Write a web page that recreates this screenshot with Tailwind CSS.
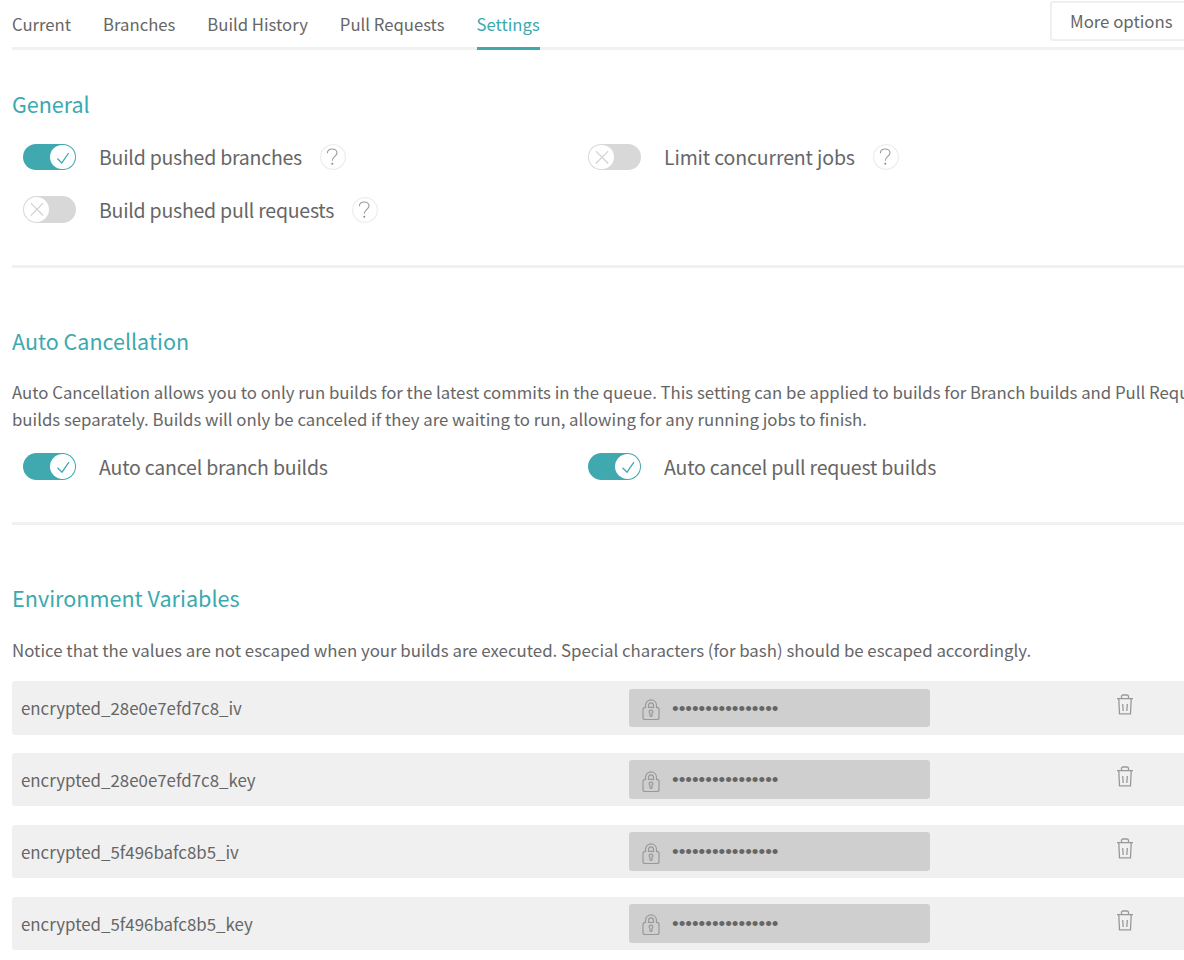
<!DOCTYPE html>
<html lang="en">
<head>
<meta charset="utf-8">
<title>Settings</title>
<script src="https://cdn.jsdelivr.net/npm/@tailwindcss/browser@4"></script>
</head>
<body class="bg-white overflow-hidden h-[960px] font-['Noto_Sans_CJK_SC',sans-serif] text-[#666] text-[16.8px]">
<svg class="hidden">
  <symbol id="check" viewBox="0 0 24 24"><path d="M7.200 13.200L11.500 17.500L18.200 7.800" fill="none" stroke="currentColor" stroke-width="1.200"/></symbol>
  <symbol id="cross" viewBox="0 0 24 24"><path d="M6.700 6L18.700 18M18.700 6L6.700 18" fill="none" stroke="currentColor" stroke-width="1.200"/></symbol>
  <symbol id="help" viewBox="0 0 26 26"><circle cx="13" cy="13" r="12.400" fill="none" stroke="#ededed" stroke-width="1.200"/><path d="M7.400 9.200C7.400 3.600 17 3.700 17 8.800C17 12.600 12.300 12.200 12.300 16.800" fill="none" stroke="#999" stroke-width="1.100"/><circle cx="12.300" cy="19.800" r="1" fill="#888"/></symbol>
  <symbol id="lock" viewBox="0 0 18 22"><g fill="none" stroke="#999" stroke-width="1.200"><path d="M3.500 8.300V6.500C3.500 -.9 14.500 -.9 14.500 6.500V8.300C16 8.300 17 9 17 10.500V18.500C17 20 16.200 20.500 15 20.500H3C1.800 20.500 1 20 1 18.500V10.500C1 9 2 8.300 3.500 8.300Z"/><path d="M6.500 8.300V6.500C6.500 3 11.500 3 11.500 6.500V8.300Z"/><path d="M8 14.200C6.300 13 7.200 11.200 9 11.200S11.700 13 10 14.200V16.500C10 17.700 8 17.700 8 16.500Z"/></g></symbol>
  <symbol id="trash" viewBox="0 0 16 21"><g fill="none" stroke="#999" stroke-width="1.300"><path d="M0 4.600H16M4.500 4.500V2.500Q4.500 1 6 1H10Q11.500 1 11.500 2.500V4.500M1.800 4.600L2.500 19.800H13.500L14.200 4.600M5.700 10L6.200 17M10.300 10L9.800 17"/></g></symbol>
</svg>
<main class="w-[1220px] pl-3">
  <nav class="flex h-[50px] border-b-3 border-[#f1f1f1] text-[16.7px] leading-[26px]">
    <div class="flex gap-8 pt-[11px]">
      <a>Current</a><a>Branches</a><a>Build History</a><a>Pull Requests</a>
      <a class="h-[39px] text-[#3ba9b0] border-b-3 border-[#3fa9af]">Settings</a>
    </div>
    <button class="ml-auto mr-[10px] mt-px h-[40px] w-[160px] shrink-0 rounded-[3px] border-2 border-[#efefef] pl-[18px] text-left text-[16.8px]">More options</button>
  </nav>

  <section class="h-[218px] border-b-3 border-[#f1f1f1] pt-[38px]">
    <h2 class="text-[21.5px] leading-8 text-[#3ba9b0]">General</h2>
    <div class="mt-[10.5px] grid grid-cols-[565px_565px] pl-[11px] text-[19.5px] leading-[52px]">
      <div class="flex h-[52.6px] items-center"><span class="flex h-[26.6px] w-[53px] justify-end rounded-full bg-[#3fa9af] p-px"><svg class="size-[24.6px] rounded-full bg-white text-[#3fa9af]"><use href="#check"/></svg></span><span class="ml-[23px] tracking-[-0.23px]">Build pushed branches</span><svg class="ml-[18px] size-[26px]"><use href="#help"/></svg></div>
      <div class="flex h-[52.6px] items-center"><span class="flex h-[26.6px] w-[53px] rounded-full bg-[#d8d8d8] p-px"><svg class="size-[24.6px] rounded-full bg-white text-[#d2d2d2]"><use href="#cross"/></svg></span><span class="ml-[23px] tracking-[-0.14px]">Limit concurrent jobs</span><svg class="ml-[18px] size-[26px]"><use href="#help"/></svg></div>
      <div class="flex h-[52.6px] items-center"><span class="flex h-[26.6px] w-[53px] rounded-full bg-[#d8d8d8] p-px"><svg class="size-[24.6px] rounded-full bg-white text-[#d2d2d2]"><use href="#cross"/></svg></span><span class="ml-[23px] pt-[1.5px] tracking-[-0.24px]">Build pushed pull requests</span><svg class="ml-[18px] mt-px size-[26px]"><use href="#help"/></svg></div>
    </div>
  </section>

  <section class="h-[257px] border-b-3 border-[#f1f1f1] pt-[57px]">
    <h2 class="text-[21.5px] leading-8 text-[#3ba9b0]">Auto Cancellation</h2>
    <p class="mt-[22px] whitespace-nowrap text-[16.77px] leading-[27px]">Auto Cancellation allows you to only run builds for the latest commits in the queue. This setting can be applied to builds for Branch builds and Pull Request<br>builds separately. Builds will only be canceled if they are waiting to run, allowing for any running jobs to finish.</p>
    <div class="mt-[7px] grid grid-cols-[565px_565px] pl-[11px] text-[19.5px] tracking-[-0.2px]">
      <div class="flex h-[53px] items-center"><span class="flex h-[27px] w-[53px] justify-end rounded-full bg-[#3fa9af] p-px"><svg class="size-[25px] rounded-full bg-white text-[#3fa9af]"><use href="#check"/></svg></span><span class="ml-[23px]">Auto cancel branch builds</span></div>
      <div class="flex h-[53px] items-center"><span class="flex h-[27px] w-[53px] justify-end rounded-full bg-[#3fa9af] p-px"><svg class="size-[25px] rounded-full bg-white text-[#3fa9af]"><use href="#check"/></svg></span><span class="ml-[23px]">Auto cancel pull request builds</span></div>
    </div>
  </section>

  <section class="pt-[57px]">
    <h2 class="text-[21.6px] leading-8 text-[#3ba9b0]">Environment Variables</h2>
    <p class="mt-[22px] text-[16.83px] leading-[27px]">Notice that the values are not escaped when your builds are executed. Special characters (for bash) should be escaped accordingly.</p>
    <ul class="mt-[18px] flex flex-col gap-[18.4px] text-[16.87px]">
      <li class="flex h-[53.5px] items-center rounded-[3px] bg-[#f0f0f0] pl-[9px]"><span class="w-[608px]">encrypted_28e0e7efd7c8_iv</span><span class="flex h-[38.5px] w-[301px] items-center rounded-[3px] bg-[#cfcfcf] pl-[13px]"><svg class="mt-1 h-[22px] w-[18px] shrink-0"><use href="#lock"/></svg><span class="ml-3 pt-0.5 font-['Liberation_Sans'] text-[19px]">••••••••••••••••</span></span><svg class="mb-1.5 ml-[187px] h-[21px] w-4"><use href="#trash"/></svg></li>
      <li class="flex h-[53.5px] items-center rounded-[3px] bg-[#f0f0f0] pl-[9px]"><span class="w-[608px]">encrypted_28e0e7efd7c8_key</span><span class="flex h-[38.5px] w-[301px] items-center rounded-[3px] bg-[#cfcfcf] pl-[13px]"><svg class="mt-1 h-[22px] w-[18px] shrink-0"><use href="#lock"/></svg><span class="ml-3 pt-0.5 font-['Liberation_Sans'] text-[19px]">••••••••••••••••</span></span><svg class="mb-1.5 ml-[187px] h-[21px] w-4"><use href="#trash"/></svg></li>
      <li class="flex h-[53.5px] items-center rounded-[3px] bg-[#f0f0f0] pl-[9px]"><span class="w-[608px]">encrypted_5f496bafc8b5_iv</span><span class="flex h-[38.5px] w-[301px] items-center rounded-[3px] bg-[#cfcfcf] pl-[13px]"><svg class="mt-1 h-[22px] w-[18px] shrink-0"><use href="#lock"/></svg><span class="ml-3 pt-0.5 font-['Liberation_Sans'] text-[19px]">••••••••••••••••</span></span><svg class="mb-1.5 ml-[187px] h-[21px] w-4"><use href="#trash"/></svg></li>
      <li class="flex h-[53.5px] items-center rounded-[3px] bg-[#f0f0f0] pl-[9px]"><span class="w-[608px]">encrypted_5f496bafc8b5_key</span><span class="flex h-[38.5px] w-[301px] items-center rounded-[3px] bg-[#cfcfcf] pl-[13px]"><svg class="mt-1 h-[22px] w-[18px] shrink-0"><use href="#lock"/></svg><span class="ml-3 pt-0.5 font-['Liberation_Sans'] text-[19px]">••••••••••••••••</span></span><svg class="mb-1.5 ml-[187px] h-[21px] w-4"><use href="#trash"/></svg></li>
    </ul>
  </section>
</main>
</body>
</html>
